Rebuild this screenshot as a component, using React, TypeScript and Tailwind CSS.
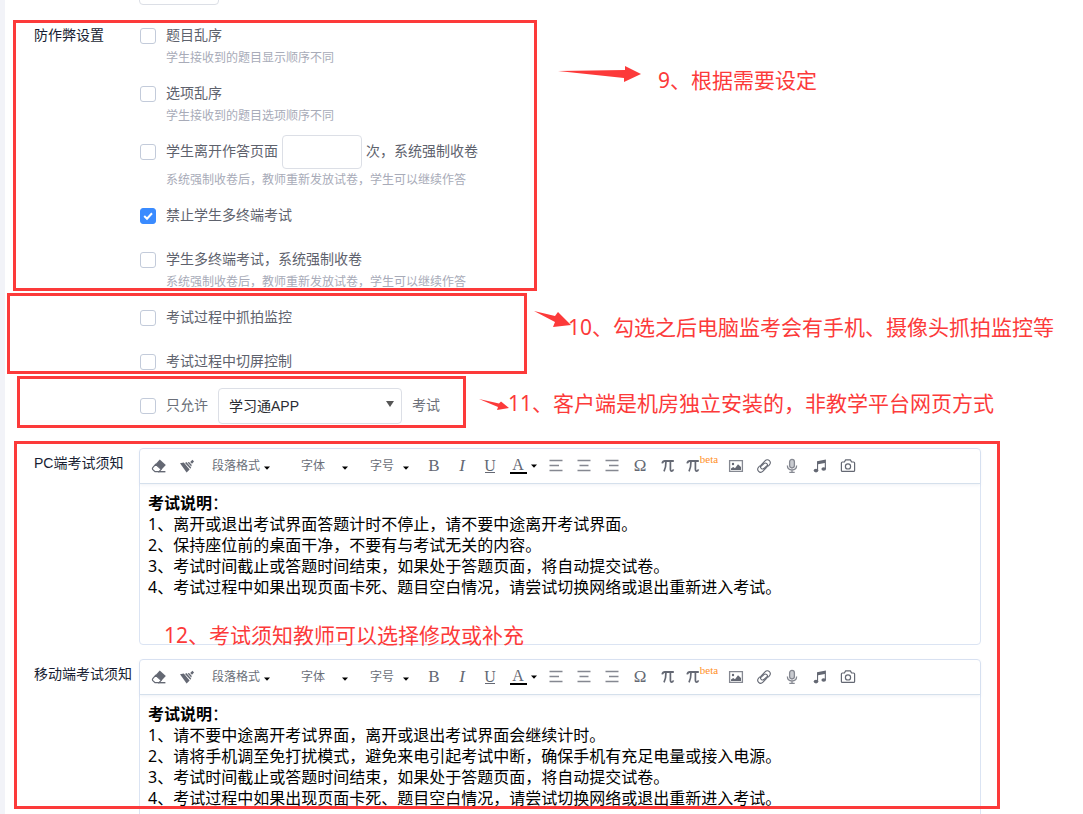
import React from "react";

const NOTE = "absolute whitespace-nowrap text-[21px] leading-7 text-[#fc3a3a] font-['Noto_Sans','Noto_Sans_CJK_SC',sans-serif]";
const BOX = "absolute border-3 border-[#fc3a3a]";

function Caret() {
  return (
    <svg viewBox="0 0 6 4" className="h-1 w-1.5" fill="#000" aria-hidden="true">
      <path d="M0 0.5H6L3 3.8Z" />
    </svg>
  );
}

function CheckBox({ id, checked }: { id: string; checked?: boolean }) {
  return (
    <span className="relative block h-4 w-4 shrink-0">
      <input
        id={id}
        type="checkbox"
        defaultChecked={checked}
        className="peer block h-4 w-4 appearance-none rounded-[3px] border border-[#c3cbda] bg-white checked:border-[#3a8bff] checked:bg-[#3a8bff]"
      />
      <svg
        viewBox="0 0 16 16"
        className="pointer-events-none absolute inset-0 hidden h-4 w-4 peer-checked:block"
        fill="none"
        stroke="#fff"
        strokeWidth="2"
        aria-hidden="true"
      >
        <path d="M4.2 8L7 10.7L12 5.3" />
      </svg>
    </span>
  );
}

function Option({ id, label, hint, checked }: { id: string; label: string; hint?: string; checked?: boolean }) {
  return (
    <div className={hint ? "pb-3.5" : "pb-5"}>
      <div className="flex h-6 items-center gap-2.5">
        <CheckBox id={id} checked={checked} />
        <label htmlFor={id} className="pb-0.5 text-sm text-[#5e626d]">
          {label}
        </label>
      </div>
      {hint && <p className="pl-[26px] text-xs leading-5 text-[#a8abb8]">{hint}</p>}
    </div>
  );
}

function ToolSelect({ label, width, caret }: { label: string; width: string; caret: string }) {
  return (
    <span className={`relative block ${width}`}>
      <select
        aria-label={label}
        className="block h-6 w-full appearance-none bg-transparent pl-[11px] text-xs text-[#6b6f79]"
      >
        <option>{label}</option>
      </select>
      <span className={`pointer-events-none absolute top-3 ${caret}`}>
        <Caret />
      </span>
    </span>
  );
}

function Tool({ name, children, width = "w-7" }: { name: string; children: React.ReactNode; width?: string }) {
  return (
    <button type="button" aria-label={name} className={`flex h-6 items-center justify-center text-[#646873] ${width}`}>
      {children}
    </button>
  );
}

const SERIF = "font-['Liberation_Serif',serif] leading-5";

function Pi() {
  return (
    <svg viewBox="0 0 14 14" className="h-3.5 w-3.5 shrink-0" fill="none" stroke="currentColor" aria-hidden="true">
      <path d="M1.2 4.4Q1.8 2 3.8 2H12.8" strokeWidth="1.8" />
      <path d="M5 2.2Q5 8.4 3 12.4M9.4 2.2V10Q9.4 12.2 10.8 12.2Q12 12.2 12.4 10.4" strokeWidth="1.7" />
    </svg>
  );
}

function Lines({ d }: { d: string }) {
  return (
    <svg viewBox="0 0 14 14" className="h-3.5 w-3.5" stroke="#858891" strokeWidth="1.4" fill="none" aria-hidden="true">
      <path d={d} />
    </svg>
  );
}

function Toolbar() {
  return (
    <div className="flex h-[35px] items-center border-b border-[#d5e0ec] pl-[5px] shadow-[0_1px_3px_rgba(120,140,170,0.12)]">
      <Tool name="清除格式">
        <svg viewBox="0 0 16 16" className="h-4 w-4" fill="currentColor" aria-hidden="true">
          <path d="M8.8 1.6L14.8 7L10.6 11.4L4.4 6.2Z" />
          <path d="M4.6 6.4L10.2 11.4L8 13.7H4L1.6 11.4Q1.1 10.6 1.8 9.6Z" fill="none" stroke="currentColor" strokeWidth="1.2" />
          <path d="M7 13H14.4V14.4H7Z" />
        </svg>
      </Tool>
      <Tool name="格式刷">
        <svg viewBox="0 0 16 16" className="h-4 w-4" fill="currentColor" aria-hidden="true">
          <path d="M1 5.2L4.8 4.6L10.6 11.4L7.6 14.6Z" />
          <path d="M6 4.9L7.4 4L12.2 9.4L11.4 10.8Z" />
          <path d="M8.6 4.4L10 3.9L12.8 7L12.2 8.4Z" />
          <path d="M11.2 4L13.4 1.8L15 3.4L13 5.8Z" />
        </svg>
      </Tool>
      <ToolSelect label="段落格式" width="w-[89px]" caret="left-[63px]" />
      <ToolSelect label="字体" width="w-[69px]" caret="left-[52px]" />
      <ToolSelect label="字号" width="w-[61px]" caret="left-11" />
      <Tool name="加粗">
        <span className={`text-[17px] ${SERIF}`}>B</span>
      </Tool>
      <Tool name="斜体">
        <span className={`text-[17px] italic ${SERIF}`}>I</span>
      </Tool>
      <Tool name="下划线">
        <span className="flex flex-col items-center">
          <span className="font-['Liberation_Serif',serif] text-base leading-3">U</span>
          <span className="h-px w-2.5 bg-current" />
        </span>
      </Tool>
      <Tool name="字体颜色" width="w-[38px]">
        <span className="flex items-center gap-1">
          <span className="flex w-[17px] flex-col items-center gap-px">
            <span className="font-['Liberation_Serif',serif] text-base leading-3">A</span>
            <span className="h-0.5 w-full bg-black" />
          </span>
          <Caret />
        </span>
      </Tool>
      <Tool name="左对齐">
        <Lines d="M0.5 1.5H13.5M0.5 6.5H10M0.5 11.5H13.5" />
      </Tool>
      <Tool name="居中对齐">
        <Lines d="M0.5 1.5H13.5M2.5 6.5H11.5M0.5 11.5H13.5" />
      </Tool>
      <Tool name="右对齐">
        <Lines d="M0.5 1.5H13.5M4 6.5H13.5M0.5 11.5H13.5" />
      </Tool>
      <Tool name="特殊字符">
        <span className={`text-[17px] ${SERIF}`}>Ω</span>
      </Tool>
      <Tool name="公式">
        <Pi />
      </Tool>
      <Tool name="公式 beta" width="w-10">
        <Pi />
        <span className="self-start font-['Liberation_Serif',serif] text-[11px] leading-[10px] text-[#ff8f27]">beta</span>
      </Tool>
      <Tool name="图片">
        <svg viewBox="0 0 16 16" className="h-4 w-4" fill="currentColor" aria-hidden="true">
          <path d="M1.6 2.6H14.4V13.4H1.6Z" fill="none" stroke="#858891" strokeWidth="1.3" />
          <circle cx="5" cy="6" r="1.2" />
          <path d="M3 12V10.5L5.2 9L7 10.2L10 6.2L13 9V12Z" />
        </svg>
      </Tool>
      <Tool name="链接">
        <svg
          viewBox="0 0 16 16"
          className="h-4 w-4"
          fill="none"
          stroke="currentColor"
          strokeWidth="1.1"
          strokeLinecap="round"
          aria-hidden="true"
        >
          <path d="M12.4 8L13.2 7.1C14.6 5.6 14.5 3.8 13.4 2.7C12.2 1.5 10.3 1.6 9 2.9L5.4 6.6C4.2 7.9 4.3 9.4 5.2 10.3C6.1 11.2 7.5 11.1 8.6 10L10.8 7.8" />
          <path d="M3.6 8L2.8 8.9C1.4 10.4 1.5 12.2 2.6 13.3C3.8 14.5 5.7 14.4 7 13.1L10.6 9.4C11.8 8.1 11.7 6.6 10.8 5.7C9.9 4.8 8.5 4.9 7.4 6L5.2 8.2" />
        </svg>
      </Tool>
      <Tool name="录音">
        <svg viewBox="0 0 16 16" className="h-4 w-4" fill="none" stroke="#858891" strokeWidth="1.3" aria-hidden="true">
          <rect x="5.6" y="1.4" width="4.8" height="8.6" rx="2.4" fill="#c9cbd0" />
          <path d="M3.4 7.6C3.4 10.6 5.4 12 8 12S12.6 10.6 12.6 7.6M8 12V14.2M5.3 14.4H10.7" />
        </svg>
      </Tool>
      <Tool name="音频">
        <svg viewBox="0 0 16 16" className="h-4 w-4" fill="currentColor" aria-hidden="true">
          <path d="M5 3.2L13.9 1.5V11H12.8V5L6.1 6.2V12.7H5Z" />
          <ellipse cx="4" cy="12.6" rx="2.3" ry="1.8" />
          <ellipse cx="11.7" cy="11" rx="2.3" ry="1.8" />
        </svg>
      </Tool>
      <Tool name="拍照">
        <svg
          viewBox="0 0 16 16"
          className="h-4 w-4"
          fill="none"
          stroke="currentColor"
          strokeWidth="1.2"
          strokeLinejoin="round"
          aria-hidden="true"
        >
          <path d="M2.4 4H4.4L5.6 1.9H10.4L11.6 4H13.6Q14.6 4 14.6 5V12.4Q14.6 13.4 13.6 13.4H2.4Q1.4 13.4 1.4 12.4V5Q1.4 4 2.4 4Z" />
          <circle cx="8" cy="8.4" r="2.6" />
        </svg>
      </Tool>
    </div>
  );
}

function Editor({ label, lines }: { label: string; lines: string[] }) {
  return (
    <section className="flex">
      <h2 className="w-[105px] shrink-0 pt-[3px] text-sm leading-6 text-[#181e33]">{label}</h2>
      <div className="min-w-0 flex-1 rounded-sm border border-[#dbe4f3]">
        <Toolbar />
        <div
          contentEditable
          suppressContentEditableWarning
          role="textbox"
          aria-label={label}
          className="min-h-40 px-2 pt-[9px] font-['Noto_Sans','Noto_Sans_CJK_SC',sans-serif] text-base leading-[21px] text-black outline-none"
        >
          <p>
            <strong>考试说明</strong>：
          </p>
          {lines.map((line, i) => (
            <p key={line}>
              {i + 1}、{line}
            </p>
          ))}
        </div>
      </div>
    </section>
  );
}

function Annotations() {
  return (
    <div className="pointer-events-none absolute inset-y-0 -left-[5px] right-0">
      <div className={`${BOX} left-[13px] top-5 h-[271px] w-[524px]`} />
      <div className={`${BOX} left-[7px] top-[293px] h-[81px] w-[520px]`} />
      <div className={`${BOX} left-[17px] top-[376px] h-[52px] w-[449px]`} />
      <div className={`${BOX} left-3.5 right-[83px] top-[441px] h-[368px]`} />
      <svg className="absolute inset-0 h-full w-full" fill="#fc3a3a" aria-hidden="true">
        <path d="M558 71L625 70V66L641 74L624 82V78Z" />
        <path d="M534 311L555 316L558 312L571 325L553 327L555 322Z" />
        <path d="M479 399L499 403.5L501 401.5L509 408L497 410L498 407Z" />
      </svg>
      <p className={`${NOTE} left-[658px] top-[66px]`}>9、根据需要设定</p>
      <p className={`${NOTE} left-[568px] top-[313px]`}>10、勾选之后电脑监考会有手机、摄像头抓拍监控等</p>
      <p className={`${NOTE} left-[508px] top-[389px]`}>11、客户端是机房独立安装的，非教学平台网页方式</p>
      <p className={`${NOTE} left-[164px] top-[621px]`}>12、考试须知教师可以选择修改或补充</p>
    </div>
  );
}

export default function App() {
  return (
    <div
      lang="zh-CN"
      className="relative h-screen overflow-hidden border-l-[5px] border-[#f2f3f8] bg-white font-['Liberation_Sans','Noto_Sans_CJK_SC',sans-serif]"
    >
      <main className="flex flex-col pl-[29px] pr-[102px]">
        <div className="flex h-[5px] items-end pl-[105px]">
          <input aria-label="数值" className="h-[34px] w-20 shrink-0 rounded-sm border border-[#dcdfe6] px-2 text-sm" />
        </div>
        <section className="flex pt-[19px]">
          <h2 className="-mt-px w-[105px] shrink-0 text-sm leading-6 text-[#181e33]">防作弊设置</h2>
          <div className="flex-1 pl-px">
            <Option id="shuffle-questions" label="题目乱序" hint="学生接收到的题目显示顺序不同" />
            <Option id="shuffle-choices" label="选项乱序" hint="学生接收到的题目选项顺序不同" />
            <div className="-mt-[5px] pb-3.5">
              <div className="flex h-[34px] items-center gap-2.5 text-sm text-[#5e626d]">
                <CheckBox id="leave-page" />
                <span className="flex items-center gap-1">
                  <label htmlFor="leave-page" className="pb-0.5">学生离开作答页面</label>
                  <input aria-label="离开次数" className="h-[34px] w-20 rounded-sm border border-[#dcdfe6] px-2 text-sm" />
                  <span className="pb-0.5">次，系统强制收卷</span>
                </span>
              </div>
              <p className="pl-[26px] pt-px text-xs leading-5 text-[#a8abb8]">系统强制收卷后，教师重新发放试卷，学生可以继续作答</p>
            </div>
            <Option id="single-device" label="禁止学生多终端考试" checked />
            <Option
              id="multi-device-submit"
              label="学生多终端考试，系统强制收卷"
              hint="系统强制收卷后，教师重新发放试卷，学生可以继续作答"
            />
            <Option id="snapshot" label="考试过程中抓拍监控" />
            <Option id="screen-switch" label="考试过程中切屏控制" />
            <div className="-mt-1.5 flex h-9 items-center gap-2.5 text-sm text-[#6b6f79]">
              <CheckBox id="only-client" />
              <label htmlFor="only-client" className="pb-0.5">只允许</label>
              <span className="relative block">
                <select
                  aria-label="考试客户端"
                  className="block h-9 w-[184px] appearance-none rounded-sm border border-[#dcdfe6] bg-white pl-2.5 text-sm text-[#2a2c33]"
                >
                  <option>学习通APP</option>
                </select>
                <svg
                  viewBox="0 0 8 6"
                  className="pointer-events-none absolute right-2 top-[13px] h-1.5 w-2"
                  fill="#555"
                  aria-hidden="true"
                >
                  <path d="M0 0H8L4 6Z" />
                </svg>
              </span>
              <span className="pb-0.5">考试</span>
            </div>
          </div>
        </section>
        <div className="flex flex-col gap-3.5 pt-6">
          <Editor
            label="PC端考试须知"
            lines={[
              "离开或退出考试界面答题计时不停止，请不要中途离开考试界面。",
              "保持座位前的桌面干净，不要有与考试无关的内容。",
              "考试时间截止或答题时间结束，如果处于答题页面，将自动提交试卷。",
              "考试过程中如果出现页面卡死、题目空白情况，请尝试切换网络或退出重新进入考试。",
            ]}
          />
          <Editor
            label="移动端考试须知"
            lines={[
              "请不要中途离开考试界面，离开或退出考试界面会继续计时。",
              "请将手机调至免打扰模式，避免来电引起考试中断，确保手机有充足电量或接入电源。",
              "考试时间截止或答题时间结束，如果处于答题页面，将自动提交试卷。",
              "考试过程中如果出现页面卡死、题目空白情况，请尝试切换网络或退出重新进入考试。",
            ]}
          />
        </div>
      </main>
      <Annotations />
    </div>
  );
}
